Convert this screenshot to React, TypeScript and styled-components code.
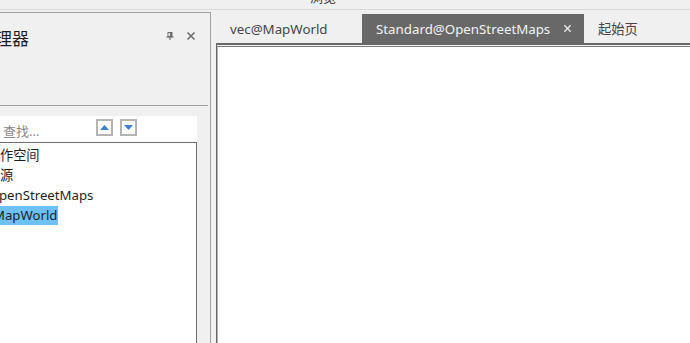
import React from "react";
import styled, { createGlobalStyle } from "styled-components";

const Global = createGlobalStyle`
  html, body {
    margin: 0;
    padding: 0;
    background: #f0f0f0;
  }
  body {
    font-family: "Noto Sans", "Noto Sans CJK SC", sans-serif;
  }
`;

const FONT = `"Noto Sans", "Noto Sans CJK SC", sans-serif`;

const Window = styled.div`
  width: 690px;
  height: 343px;
  overflow: hidden;
  display: flex;
  flex-direction: column;
  background: #f0f0f0;
  font-family: ${FONT};
`;

const TitleStrip = styled.div`
  height: 9px;
  flex: none;
  border-bottom: 1px solid #d9d9d9;
  overflow: hidden;
  display: flex;
  align-items: flex-end;
  padding-left: 310px;
`;

const TitleText = styled.span`
  font-size: 13px;
  line-height: 16px;
  margin-bottom: 4px;
  color: #333;
`;

const Main = styled.div`
  flex: 1;
  display: flex;
  min-height: 0;
`;

const LeftPanel = styled.div`
  width: 210px;
  flex: none;
  margin-top: 2px;
  border-top: 1px solid #a0a0a0;
  border-right: 1px solid #a0a0a0;
  display: flex;
  flex-direction: column;
  overflow: hidden;
`;

const PanelHeader = styled.div`
  height: 92px;
  flex: none;
  display: flex;
  align-items: flex-start;
  padding: 15px 14px 0 0;
  box-sizing: border-box;
`;

const PanelTitle = styled.div`
  flex: 1;
  font-size: 17px;
  line-height: 22px;
  color: #1e1e1e;
  white-space: nowrap;
  overflow: hidden;
`;

const ClippedLead = styled.span<{ $cut: number }>`
  display: inline-block;
  margin-left: ${(p) => -p.$cut}px;
`;

const HeaderIcons = styled.div`
  display: flex;
  align-items: center;
  gap: 12px;
  height: 14px;
  margin-top: 1px;
`;

const IconButton = styled.span`
  display: inline-flex;
  align-items: center;
  justify-content: center;
  color: #6d6d6d;
`;

const Separator = styled.div`
  height: 0;
  border-top: 1px solid #a0a0a0;
  margin-right: 2px;
  flex: none;
`;

const PanelBody = styled.div`
  flex: 1;
  display: flex;
  flex-direction: column;
  padding: 10px 13px 0 0;
  min-height: 0;
`;

const SearchRow = styled.div`
  height: 26px;
  flex: none;
  background: #fff;
  display: flex;
  align-items: center;
  padding-left: 3px;
  box-sizing: border-box;
`;

const SearchHint = styled.span`
  font-size: 13px;
  color: #8a8a8a;
  width: 93px;
  margin-top: 2px;
`;

const StepButton = styled.span`
  width: 17px;
  height: 17px;
  box-sizing: border-box;
  border: 2px solid #b4b4b4;
  background: #fff;
  display: inline-flex;
  align-items: center;
  justify-content: center;
  margin-right: 7px;
  margin-top: -4px;
`;

const Tree = styled.div`
  flex: 1;
  background: #fff;
  border-top: 1px solid #6d6d6d;
  border-right: 1px solid #6d6d6d;
  padding-top: 2px;
`;

const TreeRow = styled.div`
  height: 20px;
  display: flex;
  align-items: center;
  font-size: 13.2px;
  color: #1e1e1e;
  white-space: nowrap;
  overflow: hidden;
`;

const TreeLabel = styled.span<{ $selected?: boolean; $cut?: number }>`
  display: inline-block;
  line-height: 19px;
  padding-right: ${(p) => (p.$selected ? 1 : 2)}px;
  margin-left: ${(p) => -(p.$cut ?? 0)}px;
  background: ${(p) => (p.$selected ? "#6ec0f8" : "transparent")};
`;

const DocArea = styled.div`
  flex: 1;
  display: flex;
  flex-direction: column;
  margin-left: 5px;
  min-width: 0;
`;

const TabStrip = styled.div`
  display: flex;
  padding-top: 4px;
  height: 29px;
  flex: none;
`;

const Tab = styled.div<{ $active?: boolean; $width: number }>`
  width: ${(p) => p.$width}px;
  flex: none;
  box-sizing: border-box;
  padding-left: 14px;
  display: flex;
  align-items: center;
  font-size: 13.3px;
  white-space: nowrap;
  background: ${(p) => (p.$active ? "#686868" : "transparent")};
  color: ${(p) => (p.$active ? "#f2f2f2" : "#454545")};
`;

const TabClose = styled.span`
  margin-left: auto;
  margin-right: 12px;
  display: inline-flex;
`;

const DocFrame = styled.div`
  flex: 1;
  display: flex;
  border-top: 2px solid #686868;
  border-left: 1px solid #686868;
  padding-top: 1px;
  background: #f4f4f4;
`;

const DocCanvas = styled.div`
  flex: 1;
  background: #fff;
  border-top: 1px solid #7a7a7a;
  border-left: 1px solid #b0b0b0;
`;

const PinIcon = () => (
  <svg width="8" height="8" viewBox="0 0 8 8">
    <rect x="2" y="0.5" width="4" height="4" fill="none" stroke="#6d6d6d" strokeWidth="1" />
    <rect x="4" y="0.5" width="2" height="4" fill="#6d6d6d" />
    <line x1="0.5" y1="5" x2="7.5" y2="5" stroke="#6d6d6d" strokeWidth="1.2" />
    <line x1="4" y1="5" x2="4" y2="8" stroke="#6d6d6d" strokeWidth="1.2" />
  </svg>
);

const CrossIcon = ({ color, size }: { color: string; size: number }) => (
  <svg width={size} height={size} viewBox="0 0 10 10">
    <path d="M1.5 1.5 L8.5 8.5 M8.5 1.5 L1.5 8.5" stroke={color} strokeWidth="1.6" />
  </svg>
);

const Triangle = ({ up }: { up?: boolean }) => (
  <svg width="9" height="5" viewBox="0 0 9 5">
    <path d={up ? "M0 5 L4.5 0 L9 5 Z" : "M0 0 L9 0 L4.5 5 Z"} fill="#3d80d0" />
  </svg>
);

export default function App() {
  return (
    <>
      <Global />
      <Window>
        <TitleStrip>
          <TitleText>浏览</TitleText>
        </TitleStrip>
        <Main>
          <LeftPanel>
            <PanelHeader>
              <PanelTitle>
                <ClippedLead $cut={22}>管理器</ClippedLead>
              </PanelTitle>
              <HeaderIcons>
                <IconButton>
                  <PinIcon />
                </IconButton>
                <IconButton>
                  <CrossIcon color="#6d6d6d" size={10} />
                </IconButton>
              </HeaderIcons>
            </PanelHeader>
            <Separator />
            <PanelBody>
              <SearchRow>
                <SearchHint>查找...</SearchHint>
                <StepButton>
                  <Triangle up />
                </StepButton>
                <StepButton>
                  <Triangle />
                </StepButton>
              </SearchRow>
              <Tree>
                <TreeRow>
                  <TreeLabel>作空间</TreeLabel>
                </TreeRow>
                <TreeRow>
                  <TreeLabel>源</TreeLabel>
                </TreeRow>
                <TreeRow>
                  <TreeLabel $cut={1}>penStreetMaps</TreeLabel>
                </TreeRow>
                <TreeRow>
                  <TreeLabel $selected>
                    <ClippedLead $cut={7}>MapWorld</ClippedLead>
                  </TreeLabel>
                </TreeRow>
              </Tree>
            </PanelBody>
          </LeftPanel>
          <DocArea>
            <TabStrip>
              <Tab $width={146}>vec@MapWorld</Tab>
              <Tab $width={222} $active>
                Standard@OpenStreetMaps
                <TabClose>
                  <CrossIcon color="#e6e6e6" size={9} />
                </TabClose>
              </Tab>
              <Tab $width={80}>起始页</Tab>
            </TabStrip>
            <DocFrame>
              <DocCanvas />
            </DocFrame>
          </DocArea>
        </Main>
      </Window>
    </>
  );
}
